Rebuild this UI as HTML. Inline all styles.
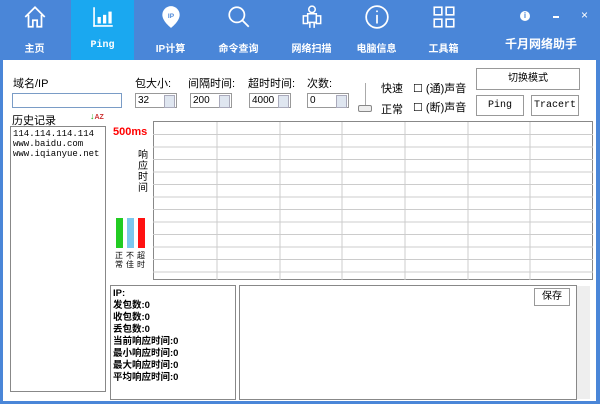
<!DOCTYPE html>
<html><head><meta charset="utf-8"><style>
*{margin:0;padding:0;box-sizing:border-box}
body{width:600px;height:404px;overflow:hidden;background:#4a86d8;font-family:"Liberation Sans","Noto Sans CJK SC",sans-serif;position:relative}
.a{position:absolute}
.hdr{left:0;top:0;width:600px;height:60px;background:#4a86d8}
.tab{top:0;height:60px;width:63px;color:#fff;font-size:10px;font-weight:bold;text-align:center}
.tab span{position:absolute;left:0;right:0;top:40px}
.tab svg{position:absolute;left:19px;top:4px}
.main{left:3px;top:60px;width:593px;height:341px;background:#fff}
.t{font-size:11px;color:#000;font-family:"Liberation Sans","Noto Sans CJK SC",sans-serif}
.inp{border:1px solid #7a9cc6;background:#fff;height:15px;font-size:10px;padding-left:2px;line-height:13px}
.spin{border:1px solid #999;background:#fff;height:15px;font-size:10px;padding-left:2px;line-height:13px}
.spin:after{content:"";position:absolute;right:1px;top:1px;width:9px;height:11px;background:#dfe6f0;border:1px solid #aab}
.btn{border:1px solid #999;background:#fff;font-size:10px;text-align:center;font-family:"Liberation Mono","Noto Sans CJK SC",monospace}
.box{border:1px solid #888;background:#fff}
</style></head><body>
<div class="a hdr"></div>
<div class="a" style="left:71px;top:0;width:63px;height:60px;background:#1aa8f0"></div>
<div class="a tab" style="left:3px"><svg width="26" height="26" viewBox="0 0 24 24" fill="none" stroke="#fff" stroke-width="1.6"><path d="M3 12L12 3l9 9M6 10v11h4v-6h4v6h4V10"/></svg><span>主页</span></div>
<div class="a tab" style="left:71px"><svg width="26" height="26" viewBox="0 0 24 24" fill="#fff"><rect x="3" y="3" width="1.5" height="18"/><rect x="3" y="19.5" width="18" height="1.5"/><rect x="7" y="12" width="3" height="6"/><rect x="12" y="10" width="3" height="8"/><rect x="17" y="7" width="3" height="11"/></svg><span style="font-family:'Liberation Mono',monospace">Ping</span></div>
<div class="a tab" style="left:139px"><svg width="26" height="26" viewBox="0 0 24 24"><path d="M12 2a8 8 0 0 1 8 8c0 6-8 12-8 12S4 16 4 10a8 8 0 0 1 8-8z" fill="#fff"/><text x="12" y="13" font-size="6" fill="#4a86d8" text-anchor="middle" font-family="Liberation Sans">IP</text></svg><span>IP计算</span></div>
<div class="a tab" style="left:207px"><svg width="26" height="26" viewBox="0 0 24 24" fill="none" stroke="#fff" stroke-width="1.6"><circle cx="10" cy="10" r="7"/><path d="M15 15l6 6"/></svg><span>命令查询</span></div>
<div class="a tab" style="left:280px"><svg width="26" height="26" viewBox="0 0 24 24" fill="none" stroke="#fff" stroke-width="1.4"><circle cx="12" cy="5" r="3"/><path d="M8 9h8v8h-8zM4 11h4v7H4zM16 11h4v7h-4zM10 17v5M14 17v5"/></svg><span>网络扫描</span></div>
<div class="a tab" style="left:345px"><svg width="26" height="26" viewBox="0 0 24 24" fill="none" stroke="#fff" stroke-width="1.6"><circle cx="12" cy="12" r="10"/><path d="M12 10v8M12 6v1.5"/></svg><span>电脑信息</span></div>
<div class="a tab" style="left:412px"><svg width="26" height="26" viewBox="0 0 24 24" fill="none" stroke="#fff" stroke-width="1.5"><rect x="3" y="3" width="7" height="7"/><rect x="14" y="3" width="7" height="7"/><rect x="3" y="14" width="7" height="7"/><rect x="14" y="14" width="7" height="7"/></svg><span>工具箱</span></div>
<div class="a" style="left:520px;top:11px;width:10px;height:10px;border-radius:50%;background:#fff;color:#4a86d8;font-size:8px;font-weight:bold;text-align:center;line-height:10px">i</div>
<div class="a" style="left:553px;top:16px;width:6px;height:2px;background:#fff"></div>
<div class="a" style="left:581px;top:8px;color:#fff;font-size:12px">×</div>
<div class="a" style="left:505px;top:35px;color:#fff;font-size:12px;font-weight:bold">千月网络助手</div>
<div class="a main"></div>
<div class="a t" style="left:13px;top:75px">域名/IP</div>
<div class="a inp" style="left:12px;top:93px;width:110px"></div>
<div class="a t" style="left:12px;top:112px">历史记录</div>
<div class="a" style="left:90px;top:111px;font-size:9px;color:#2a2;font-weight:bold">↓<span style="color:#c33;font-size:7px">AZ</span></div>
<div class="a box" style="left:10px;top:126px;width:96px;height:266px;font-family:'Liberation Mono',monospace;font-size:9px;padding:2px 2px;line-height:10px">114.114.114.114<br>www.baidu.com<br>www.iqianyue.net</div>
<div class="a t" style="left:135px;top:75px">包大小:</div>
<div class="a t" style="left:188px;top:75px">间隔时间:</div>
<div class="a t" style="left:248px;top:75px">超时时间:</div>
<div class="a t" style="left:307px;top:75px">次数:</div>
<div class="a spin" style="left:135px;top:93px;width:42px">32</div>
<div class="a spin" style="left:190px;top:93px;width:42px">200</div>
<div class="a spin" style="left:249px;top:93px;width:42px">4000</div>
<div class="a spin" style="left:307px;top:93px;width:42px">0</div>
<div class="a" style="left:365px;top:83px;width:1px;height:27px;background:#aaa"></div>
<div class="a" style="left:358px;top:105px;width:14px;height:7px;border:1px solid #888;border-radius:2px;background:#eee"></div>
<div class="a t" style="left:381px;top:80px">快速</div>
<div class="a t" style="left:381px;top:101px">正常</div>
<div class="a t" style="left:413px;top:80px">☐ (通)声音</div>
<div class="a t" style="left:413px;top:99px">☐ (断)声音</div>
<div class="a btn" style="left:476px;top:68px;width:104px;height:22px;line-height:20px;font-family:'Liberation Sans','Noto Sans CJK SC',sans-serif">切换模式</div>
<div class="a btn" style="left:476px;top:95px;width:48px;height:21px;line-height:19px">Ping</div>
<div class="a btn" style="left:531px;top:95px;width:48px;height:21px;line-height:19px">Tracert</div>
<div class="a" style="left:113px;top:126px;color:#f00;font-size:11px;font-weight:bold">500ms</div>
<div class="a t" style="left:138px;top:150px;width:12px;line-height:11px;font-size:10px">响应时间</div>
<div class="a" style="left:116px;top:218px;width:7px;height:30px;background:#2c2"></div>
<div class="a" style="left:127px;top:218px;width:7px;height:30px;background:#7cc8ee"></div>
<div class="a" style="left:138px;top:218px;width:7px;height:30px;background:#f11"></div>
<div class="a" style="left:115px;top:251px;font-size:8px;line-height:9px;width:40px"><span class="a" style="left:0;width:9px">正常</span><span class="a" style="left:11px;width:9px">不佳</span><span class="a" style="left:22px;width:9px">超时</span></div>
<svg class="a" style="left:153px;top:121px" width="441" height="160">
<rect x="0.5" y="0.5" width="439" height="158" fill="#fff" stroke="#888"/>
<g stroke="#ccc">
<path d="M0 13.5H440M0 26H440M0 38.5H440M0 51H440M0 63.5H440M0 76H440M0 88.5H440M0 101H440M0 113.5H440M0 126H440M0 138.5H440M0 151H440"/>
<path d="M64 1V159M127 1V159M189 1V159M252 1V159M315 1V159M377 1V159"/>
</g></svg>
<div class="a box" style="left:110px;top:285px;width:126px;height:115px;font-size:9.5px;font-weight:bold;line-height:12px;padding:2px 2px">IP:<br>发包数:0<br>收包数:0<br>丢包数:0<br>当前响应时间:0<br>最小响应时间:0<br>最大响应时间:0<br>平均响应时间:0</div>
<div class="a box" style="left:239px;top:285px;width:338px;height:115px"></div>
<div class="a" style="left:577px;top:286px;width:13px;height:113px;background:#eee"></div>
<div class="a btn" style="left:534px;top:288px;width:36px;height:18px;line-height:16px;font-family:'Liberation Sans','Noto Sans CJK SC',sans-serif">保存</div>
</body></html>
